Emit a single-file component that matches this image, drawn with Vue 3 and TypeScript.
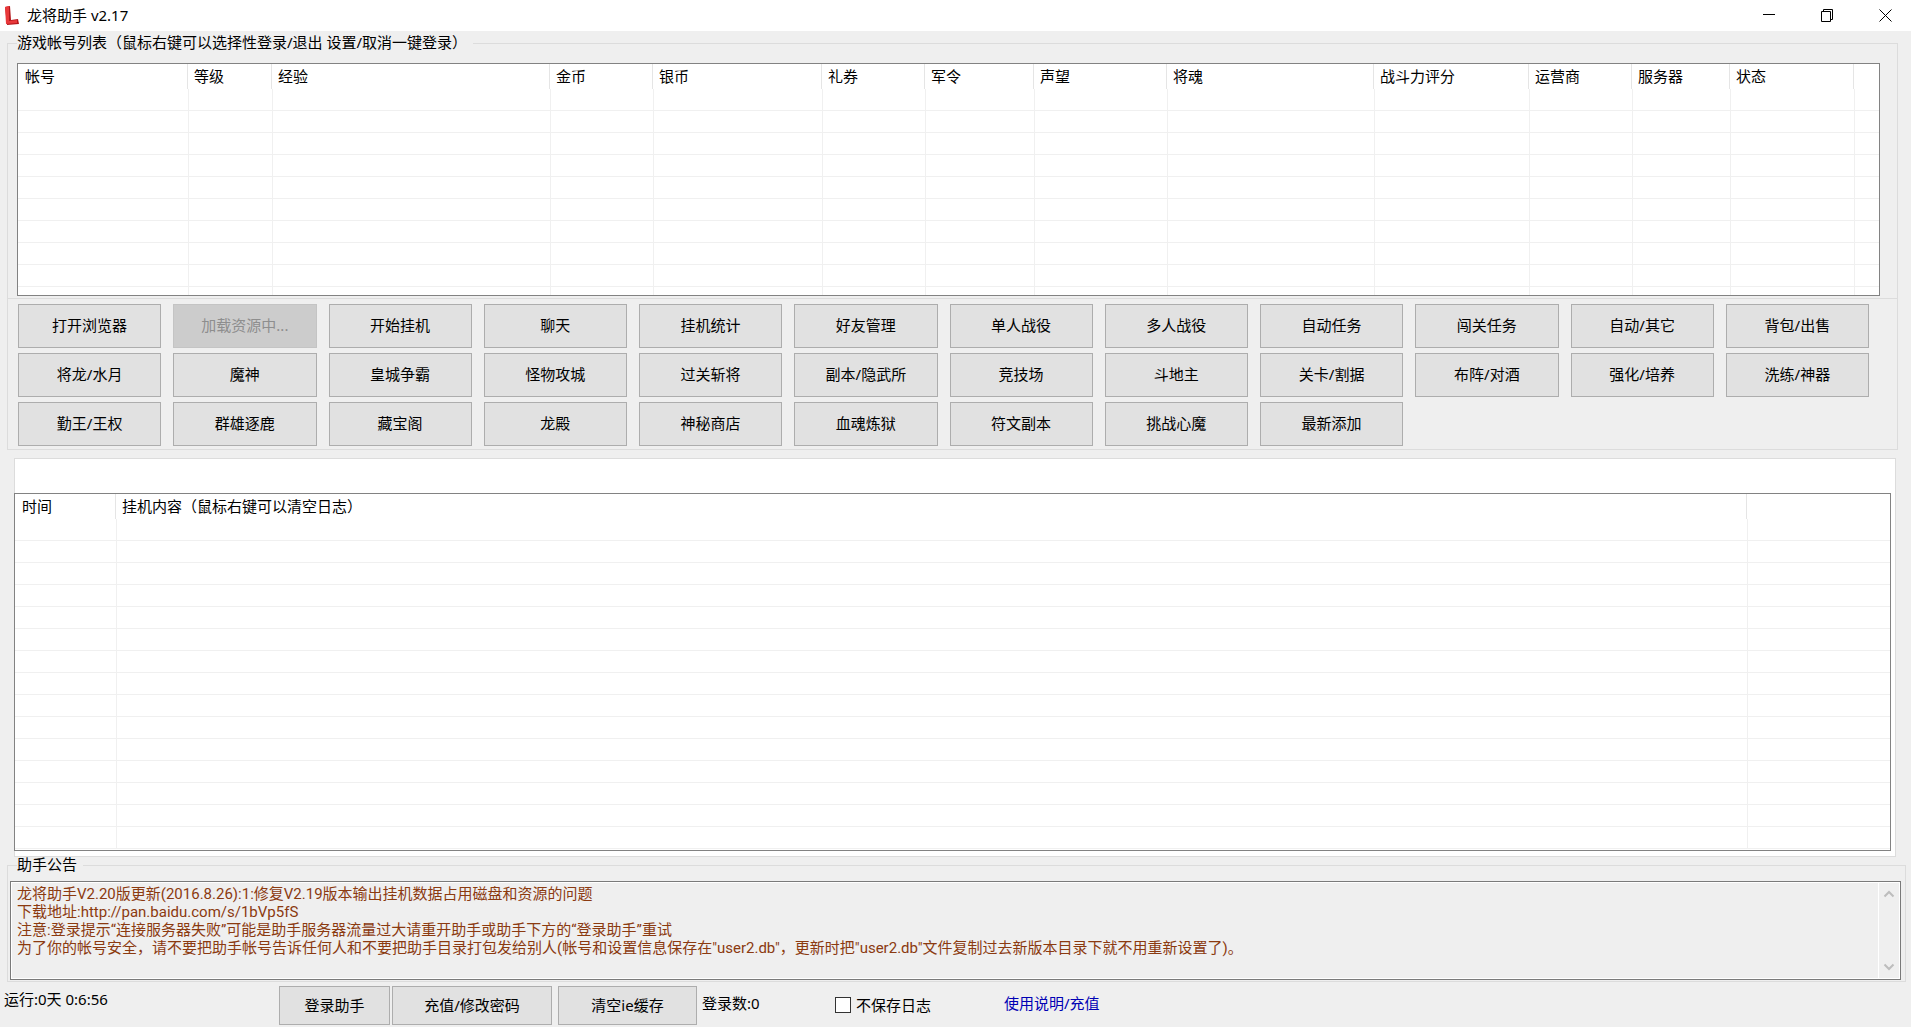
<script setup lang="ts">
import { ref } from 'vue'

interface Column {
  label: string
  width: number | null
}

const accountColumns: Column[] = [
  { label: '帐号', width: 170 },
  { label: '等级', width: 84 },
  { label: '经验', width: 278 },
  { label: '金币', width: 103 },
  { label: '银币', width: 169 },
  { label: '礼券', width: 103 },
  { label: '军令', width: 109 },
  { label: '声望', width: 133 },
  { label: '将魂', width: 207 },
  { label: '战斗力评分', width: 155 },
  { label: '运营商', width: 103 },
  { label: '服务器', width: 98 },
  { label: '状态', width: 124 },
  { label: '', width: null },
]

const actions: string[] = [
  '打开浏览器', '加载资源中...', '开始挂机', '聊天', '挂机统计', '好友管理',
  '单人战役', '多人战役', '自动任务', '闯关任务', '自动/其它', '背包/出售',
  '将龙/水月', '魔神', '皇城争霸', '怪物攻城', '过关斩将', '副本/隐武所',
  '竞技场', '斗地主', '关卡/割据', '布阵/对酒', '强化/培养', '洗练/神器',
  '勤王/王权', '群雄逐鹿', '藏宝阁', '龙殿', '神秘商店', '血魂炼狱',
  '符文副本', '挑战心魔', '最新添加',
]
const loadingAction = '加载资源中...'

const notice = ref<string>(
  [
    '龙将助手V2.20版更新(2016.8.26):1:修复V2.19版本输出挂机数据占用磁盘和资源的问题',
    '下载地址:http://pan.baidu.com/s/1bVp5fS',
    '注意:登录提示“连接服务器失败”可能是助手服务器流量过大请重开助手或助手下方的“登录助手”重试',
    '为了你的帐号安全，请不要把助手帐号告诉任何人和不要把助手目录打包发给别人(帐号和设置信息保存在"user2.db"，更新时把"user2.db"文件复制过去新版本目录下就不用重新设置了)。',
  ].join('\n'),
)
const skipLog = ref(false)
</script>

<template>
  <div class="window">
    <header class="titlebar">
      <svg class="logo" viewBox="0 0 16 20" aria-hidden="true">
        <path d="M1 1 L6 0 L7 14 L14 13 L15 18 L3 19 Z" fill="#b5171b" />
        <path d="M1 1 L5 0 L5 15 L13 14 L13 17 L2 18 Z" fill="#e8383a" />
      </svg>
      <h1 class="title">龙将助手 v2.17</h1>
      <div class="controls">
        <button type="button" aria-label="最小化">
          <svg viewBox="0 0 13 13"><path d="M0 5.5H12" /></svg>
        </button>
        <button type="button" aria-label="还原">
          <svg viewBox="0 0 13 13"><path d="M0.5 2.5H9.5V12.5H0.5ZM2.5 2.5V0.5H11.5V10.5H9.5" /></svg>
        </button>
        <button type="button" aria-label="关闭">
          <svg viewBox="0 0 13 13"><path d="M0.5 0.5L12.5 12.5M12.5 0.5L0.5 12.5" /></svg>
        </button>
      </div>
    </header>

    <main class="body">
      <fieldset class="group accounts">
        <legend>游戏帐号列表（鼠标右键可以选择性登录/退出 设置/取消一键登录）</legend>
        <div class="list">
          <table>
            <colgroup>
              <col
                v-for="(column, i) in accountColumns"
                :key="i"
                :style="column.width ? { width: column.width + 'px' } : undefined"
              />
            </colgroup>
            <thead>
              <tr>
                <th v-for="(column, i) in accountColumns" :key="i" scope="col">{{ column.label }}</th>
              </tr>
            </thead>
            <tbody>
              <tr v-for="row in 9" :key="row">
                <td v-for="(column, i) in accountColumns" :key="i"></td>
              </tr>
              <tr class="partial">
                <td v-for="(column, i) in accountColumns" :key="i"></td>
              </tr>
            </tbody>
          </table>
        </div>
      </fieldset>

      <section class="group actions">
        <button
          v-for="action in actions"
          :key="action"
          type="button"
          class="btn"
          :disabled="action === loadingAction"
        >{{ action }}</button>
      </section>

      <section class="log">
        <div class="list">
          <table>
            <colgroup>
              <col class="col-time" />
              <col />
              <col class="col-rest" />
            </colgroup>
            <thead>
              <tr>
                <th scope="col">时间</th>
                <th scope="col">挂机内容（鼠标右键可以清空日志）</th>
                <th></th>
              </tr>
            </thead>
            <tbody>
              <tr v-for="row in 15" :key="row">
                <td></td>
                <td></td>
                <td></td>
              </tr>
            </tbody>
          </table>
        </div>
      </section>

      <fieldset class="group notice">
        <legend>助手公告</legend>
        <div class="notice-box">
          <textarea v-model="notice" readonly aria-label="助手公告"></textarea>
          <div class="scrollbar">
            <button type="button" aria-label="向上滚动">
              <svg viewBox="0 0 12 8"><path d="M1.5 6.5L6 2L10.5 6.5" /></svg>
            </button>
            <button type="button" aria-label="向下滚动">
              <svg viewBox="0 0 12 8"><path d="M1.5 1.5L6 6L10.5 1.5" /></svg>
            </button>
          </div>
        </div>
      </fieldset>
    </main>

    <footer class="statusbar">
      <span class="uptime">运行:0天 0:6:56</span>
      <button type="button" class="btn login">登录助手</button>
      <button type="button" class="btn recharge">充值/修改密码</button>
      <button type="button" class="btn cache">清空ie缓存</button>
      <span class="count">登录数:0</span>
      <label class="check">
        <input v-model="skipLog" type="checkbox" />
        <span>不保存日志</span>
      </label>
      <a class="help" href="#">使用说明/充值</a>
    </footer>
  </div>
</template>

<style>
body {
  margin: 0;
  background: #efefef;
}
</style>

<style scoped>
.window {
  min-height: 100vh;
  box-sizing: border-box;
  background: #efefef;
  color: #000;
  font-family: "Noto Sans", "Noto Sans CJK SC", sans-serif;
  font-size: 15px;
  line-height: 18px;
}

button,
textarea {
  font: inherit;
  color: inherit;
}

.titlebar {
  display: flex;
  align-items: center;
  height: 31px;
  padding-left: 4px;
  background: #fff;
}

.logo {
  width: 16px;
  height: 20px;
}

.title {
  flex: 1;
  margin: 0 0 0 7px;
  padding-bottom: 2px;
  font-size: 15px;
  font-weight: 400;
}

.controls {
  display: flex;
}

.controls button {
  display: flex;
  align-items: center;
  justify-content: center;
  width: 58px;
  height: 31px;
  padding: 0 0 0 6px;
  border: 0;
  background: none;
}

.controls svg {
  width: 13px;
  height: 13px;
  fill: none;
  stroke: #000;
}

.body {
  padding-top: 4px;
}

.group {
  min-width: 0;
  margin: 0 13px 0 7px;
  border: 1px solid #dcdcdc;
}

legend {
  padding: 0 6px 2px 0;
  line-height: 14px;
}

.accounts {
  padding: 12px 17px 2px 9px;
  border-bottom: 0;
}

.list {
  border: 1px solid #828282;
  background: #fff;
}

table {
  width: 100%;
  table-layout: fixed;
  border-collapse: separate;
  border-spacing: 0;
}

th,
td {
  box-sizing: border-box;
  padding: 0;
}

th {
  height: 25px;
  padding: 0 0 2px 6px;
  border-right: 1px solid #e5e5e5;
  font-weight: 400;
  text-align: left;
  white-space: nowrap;
}

th:first-child {
  padding-left: 7px;
}

th:last-child {
  border-right: 0;
}

td {
  height: 22px;
  border-bottom: 1px solid #f0f0f0;
}

td + td {
  border-left: 1px solid #f0f0f0;
}

.partial td {
  height: 8px;
  border-bottom: 0;
}

.actions {
  display: grid;
  grid-template-columns: repeat(12, 1fr);
  gap: 5px 12px;
  padding: 5px 28px 3px 10px;
}

.btn {
  height: 44px;
  padding: 0 0 2px;
  border: 1px solid #adadad;
  border-radius: 0;
  background: #e1e1e1;
  white-space: nowrap;
}

.btn:disabled {
  border-color: #c4c4c4;
  background: #cccccc;
  color: #8e8e8e;
}

.log {
  margin: 8px 15px 0 14px;
  padding: 34px 4px 5px 0;
  border: 1px solid #dcdcdc;
  background: #fff;
}

.log .list {
  margin-left: -1px;
  padding-bottom: 1px;
}

.col-time {
  width: 101px;
}

.col-rest {
  width: 143px;
}

.notice {
  margin-right: 5px;
  padding: 8px 4px 1px 2px;
}

.notice legend {
  margin-left: 7px;
}

.notice-box {
  display: flex;
  height: 97px;
  border: 1px solid #7a7a7a;
  box-shadow: inset 0 0 0 1px #fff;
}

.notice-box textarea {
  flex: 1;
  margin: 1px 0 1px 1px;
  padding: 2px 5px;
  border: 0;
  outline: 0;
  resize: none;
  overflow: hidden;
  background: #efefef;
  color: #8b3a10;
  font-family: Roboto, "Noto Sans CJK SC", sans-serif;
}

.scrollbar {
  display: flex;
  flex-direction: column;
  justify-content: space-between;
  width: 20px;
  margin: 1px;
  border-left: 1px solid #fff;
}

.scrollbar button {
  display: flex;
  align-items: center;
  justify-content: center;
  height: 22px;
  padding: 0;
  border: 0;
  background: none;
}

.scrollbar svg {
  width: 12px;
  height: 8px;
  fill: none;
  stroke: #bdbdbd;
  stroke-width: 2;
}

.statusbar {
  display: flex;
  align-items: center;
  padding: 4px 0 2px 4px;
}

.statusbar .btn {
  height: 39px;
}

.uptime {
  width: 275px;
  padding-bottom: 14px;
}

.statusbar .login {
  width: 111px;
  margin-right: 2px;
}

.statusbar .recharge {
  width: 160px;
  margin-right: 6px;
}

.statusbar .cache {
  width: 139px;
}

.count {
  width: 133px;
  padding: 0 0 6px 5px;
}

.check {
  display: flex;
  align-items: center;
  gap: 5px;
  width: 169px;
  padding-bottom: 2px;
}

.check input {
  appearance: none;
  width: 16px;
  height: 16px;
  margin: 0;
  border: 1px solid #333;
  background: #fff;
}

.check input:checked {
  background: #333;
}

.help {
  padding-bottom: 6px;
  color: #0000b4;
  text-decoration: none;
}
</style>
